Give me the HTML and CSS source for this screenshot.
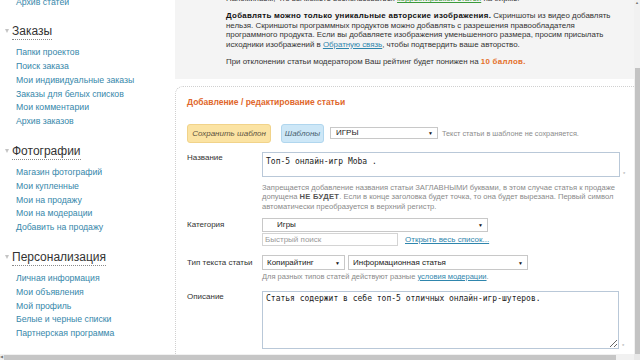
FILE: index.html
```html
<!DOCTYPE html>
<html lang="ru">
<head>
    <meta charset="UTF-8">
    <meta name="viewport" content="width=device-width, initial-scale=1.0">
    <title>Добавление статьи</title>
    <link rel="stylesheet" href="styles.css">
</head>
<body>
    <div class="screen">
        <div class="page">
            <aside class="sidebar">
                <ul class="menu menu-first">
                    <li><a href="#">Архив статей</a></li>
                </ul>

                <h3 class="menu-title"><span>Заказы</span></h3>
                <ul class="menu">
                    <li><a href="#">Папки проектов</a></li>
                    <li><a href="#">Поиск заказа</a></li>
                    <li><a href="#">Мои индивидуальные заказы</a></li>
                    <li><a href="#">Заказы для белых списков</a></li>
                    <li><a href="#">Мои комментарии</a></li>
                    <li><a href="#">Архив заказов</a></li>
                </ul>

                <h3 class="menu-title"><span>Фотографии</span></h3>
                <ul class="menu">
                    <li><a href="#">Магазин фотографий</a></li>
                    <li><a href="#">Мои купленные</a></li>
                    <li><a href="#">Мои на продажу</a></li>
                    <li><a href="#">Мои на модерации</a></li>
                    <li><a href="#">Добавить на продажу</a></li>
                </ul>

                <h3 class="menu-title"><span>Персонализация</span></h3>
                <ul class="menu">
                    <li><a href="#">Личная информация</a></li>
                    <li><a href="#">Мои объявления</a></li>
                    <li><a href="#">Мой профиль</a></li>
                    <li><a href="#">Белые и черные списки</a></li>
                    <li><a href="#">Партнерская программа</a></li>
                </ul>
            </aside>

            <main class="content">
                <div class="notice">
                    <p>Напоминаем, что вы можете воспользоваться <a class="link-green" href="#">корректировкой статей</a> на бирже.</p>
                    <p>
                        <b>Добавлять можно только уникальные авторские изображения.</b> Скриншоты из видео добавлять<br>
                        нельзя. Скриншоты программных продуктов можно добавлять с разрешения правообладателя<br>
                        программного продукта. Если вы добавляете изображения уменьшенного размера, просим присылать<br>
                        исходники изображений в <a class="link" href="#">Обратную связь</a>, чтобы подтвердить ваше авторство.
                    </p>
                    <p>При отклонении статьи модератором Ваш рейтинг будет понижен на <b class="accent">10 баллов.</b></p>
                </div>

                <section class="card">
                    <h2 class="card-title">Добавление / редактирование статьи</h2>

                    <div class="templates">
                        <button class="btn btn-yellow" type="button">Сохранить шаблон</button>
                        <button class="btn btn-blue" type="button">Шаблоны</button>
                        <div class="select select-template">ИГРЫ<span class="arrow">▼</span></div>
                        <span class="templates-note">Текст статьи в шаблоне не сохраняется.</span>
                    </div>

                    <div class="field field-name">
                        <label class="field-label">Название</label>
                        <div class="field-body">
                            <div class="with-mark">
                                <textarea class="input input-name" readonly>Топ-5 онлайн-игр Moba .</textarea>
                                <span class="mark">*</span>
                            </div>
                            <p class="hint">
                                Запрещается добавление названия статьи ЗАГЛАВНЫМИ буквами, в этом случае статья к продаже<br>
                                допущена <b>НЕ БУДЕТ</b>. Если в конце заголовка будет точка, то она будет вырезана. Первый символ<br>
                                автоматически преобразуется в верхний регистр.
                            </p>
                        </div>
                    </div>

                    <div class="field field-category">
                        <label class="field-label">Категория</label>
                        <div class="field-body">
                            <div class="select select-category">Игры<span class="arrow">▼</span></div>
                            <div class="search-row">
                                <div class="search">Быстрый поиск</div>
                                <a class="link" href="#">Открыть весь список...</a>
                            </div>
                        </div>
                    </div>

                    <div class="field field-type">
                        <label class="field-label">Тип текста статьи</label>
                        <div class="field-body">
                            <div class="type-row">
                                <div class="select select-kind">Копирайтинг<span class="arrow">▼</span></div>
                                <div class="select select-genre">Информационная статья<span class="arrow">▼</span></div>
                            </div>
                            <p class="hint hint-type">Для разных типов статей действуют разные <a class="link" href="#">условия модерации</a>.</p>
                        </div>
                    </div>

                    <div class="field field-desc">
                        <label class="field-label">Описание</label>
                        <div class="field-body">
                            <div class="with-mark">
                                <textarea class="input input-desc" readonly>Статья содержит в себе топ-5 отличных онлайн-игр-шутеров.</textarea>
                                <span class="mark mark-bottom">*</span>
                            </div>
                        </div>
                    </div>
                </section>
            </main>
        </div>

        <div class="vscroll">
            <span class="scroll-arrow">▲</span>
            <div class="vthumb"></div>
        </div>
        <div class="hscroll">
            <span class="scroll-arrow">◀</span>
            <div class="hthumb"></div>
        </div>
        <div class="corner"></div>
    </div>
</body>
</html>
```

FILE: styles.css
```css
* {
    box-sizing: border-box;
}
body {
    margin: 0;
    width: 640px;
    height: 360px;
    overflow: hidden;
    font-family: "Liberation Sans", Arial, sans-serif;
    font-size: 8px;
    color: #333;
    background-color: #fff;
}
.screen {
    display: grid;
    grid-template-columns: 634px 6px;
    grid-template-rows: 354px 6px;
    width: 640px;
    height: 360px;
}
.page {
    display: flex;
    overflow: hidden;
}

/* sidebar */
.sidebar {
    width: 175px;
    flex: none;
}
.menu {
    list-style: none;
    margin: 0;
    padding: 0 0 0 16px;
}
.menu a {
    display: block;
    font-size: 8.7px;
    line-height: 13.8px;
    color: #3687aa;
    text-decoration: none;
    white-space: nowrap;
}
.menu-first {
    margin-top: -4.5px;
}
.menu-title {
    display: flex;
    align-items: center;
    gap: 3px;
    margin: 15px 0 6px;
    padding-left: 5px;
    font-size: 12px;
    font-weight: normal;
    line-height: 15px;
    color: #333;
}
.menu-title::before {
    content: "";
    border-left: 2.5px solid transparent;
    border-right: 2.5px solid transparent;
    border-top: 4px solid #c4c4c4;
    margin-top: -3px;
}
.menu-title span {
    border-bottom: 1px dotted #8a8a8a;
}

/* content */
.content {
    flex: 1;
    min-width: 0;
}
.notice {
    margin-top: -5.75px;
    padding: 0 10px 12.25px 51px;
    background-color: #f4f4f4;
    font-size: 7.9px;
    white-space: nowrap;
}
.notice p {
    margin: 0 0 7.5px;
    line-height: 9.5px;
}
.notice p:last-child {
    margin-bottom: 0;
}
.notice b {
    color: #111;
    letter-spacing: 0.3px;
}
.notice .accent {
    color: #e4702a;
}
.link {
    color: #2f86ad;
    text-decoration: underline;
}
.link-green {
    color: #3a9a3a;
    text-decoration: underline;
}

.card {
    margin-top: 7px;
    padding: 10px 0 0 11px;
    border: 1px dotted #d0d0d0;
    border-right: none;
    border-bottom: none;
    border-radius: 8px 0 0 0;
    height: 400px;
}
.card-title {
    margin: 0 0 17px;
    font-size: 8.5px;
    line-height: 10px;
    color: #e0672b;
}

.templates {
    display: flex;
    align-items: center;
    height: 19px;
}
.btn {
    height: 19px;
    padding: 0;
    border-radius: 3px;
    font-family: inherit;
    font-size: 8px;
    font-style: italic;
    cursor: pointer;
}
.btn-yellow {
    width: 84px;
    margin-right: 10px;
    background-color: #fbe3a3;
    border: 1px solid #f1d38a;
    color: #5d5340;
}
.btn-blue {
    width: 43px;
    margin-right: 6px;
    background-color: #cde7f7;
    border: 1px solid #b0d6ee;
    color: #4a5f70;
}
.select {
    position: relative;
    border: 1px solid #c8c8c8;
    background-color: #fff;
    color: #222;
    font-size: 8px;
    white-space: nowrap;
}
.select .arrow {
    position: absolute;
    top: 50%;
    right: 4px;
    transform: translateY(-50%);
    font-size: 5px;
    color: #111;
}
.select-template {
    width: 108px;
    height: 12px;
    padding-left: 5px;
    line-height: 10px;
}
.templates-note {
    margin-left: 4px;
    font-size: 7.3px;
    color: #8c8c8c;
    white-space: nowrap;
}

.field {
    display: flex;
}
.field-label {
    width: 75px;
    flex: none;
    font-size: 8px;
    color: #333;
    white-space: nowrap;
}
.field-body {
    flex: 1;
    min-width: 0;
}
.with-mark {
    display: flex;
    align-items: flex-end;
}
.mark {
    margin-left: 3px;
    font-size: 6px;
    color: #aaa;
}
.input {
    display: block;
    margin: 0;
    border: 1px solid #b9c8d8;
    background-color: #fff;
    font-family: "DejaVu Sans Mono", "Liberation Mono", monospace;
    font-size: 8px;
    line-height: 11px;
    color: #222;
    outline: none;
}

.field-name {
    margin-top: 9px;
}
.field-name .field-label {
    line-height: 12px;
}
.input-name {
    width: 358px;
    height: 25px;
    padding: 3.5px 3px 0;
    resize: none;
    overflow: hidden;
}
.hint {
    margin: 6px 0 0;
    font-size: 7.6px;
    line-height: 9.5px;
    color: #8a8a8a;
    white-space: nowrap;
}
.hint b {
    color: #555;
    letter-spacing: 0.3px;
}

.field-category {
    margin-top: 7px;
}
.field-category .field-label {
    line-height: 14px;
}
.select-category {
    width: 226px;
    height: 14px;
    padding-left: 14px;
    line-height: 12px;
}
.search-row {
    display: flex;
    align-items: center;
    margin-top: 1px;
}
.search {
    width: 136px;
    height: 13px;
    padding-left: 2px;
    border: 1px solid #d4d4d4;
    font-size: 8px;
    line-height: 11px;
    color: #9a9a9a;
}
.search-row .link {
    margin-left: 7px;
    font-size: 8px;
}

.field-type {
    margin-top: 9px;
}
.field-type .field-label {
    line-height: 15px;
}
.type-row {
    display: flex;
    gap: 3px;
}
.select-kind,
.select-genre {
    height: 15px;
    padding-left: 4px;
    line-height: 13px;
}
.select-kind {
    width: 83px;
}
.select-genre {
    width: 180px;
}
.hint-type {
    margin-top: 2px;
    font-size: 7.5px;
}

.field-desc {
    margin-top: 9px;
}
.field-desc .field-label {
    line-height: 12px;
}
.input-desc {
    width: 357px;
    height: 58px;
    padding: 1px 3px 0;
    resize: vertical;
}

/* scrollbars */
.vscroll {
    grid-column: 2;
    grid-row: 1;
    display: flex;
    flex-direction: column;
    align-items: center;
    background-color: #f1f1f1;
}
.vthumb {
    flex: 1;
    width: 5px;
    margin-top: 62px;
    background-color: #c3c3c3;
}
.hscroll {
    grid-column: 1;
    grid-row: 2;
    display: flex;
    align-items: center;
    background-color: #f1f1f1;
}
.hthumb {
    width: 612px;
    height: 5px;
    margin-left: 1px;
    background-color: #c6c6c6;
}
.scroll-arrow {
    font-size: 4px;
    line-height: 6px;
    color: #777;
}
.corner {
    grid-column: 2;
    grid-row: 2;
    background-color: #e8e8e8;
}
```
